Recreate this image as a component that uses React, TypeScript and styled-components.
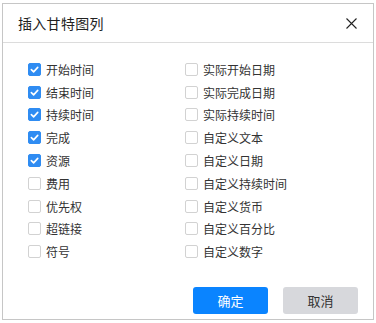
import styled, { createGlobalStyle } from 'styled-components';

const Global = createGlobalStyle`
  body {
    margin: 0;
    background: #fff;
    font-family: "Noto Sans CJK SC", "Noto Sans", sans-serif;
    color: #333;
  }
`;

const Dialog = styled.div`
  box-sizing: border-box;
  margin: 3px 0 0 2px;
  width: 372px;
  height: 317px;
  border: 1px solid #c6c6c6;
  display: flex;
  flex-direction: column;
  background: #fff;
`;

const Header = styled.div`
  height: 38px;
  border-bottom: 1px solid #dcdcdc;
  display: flex;
  align-items: center;
  justify-content: space-between;
  padding: 0 14px 0 15px;
  flex-shrink: 0;
`;

const Title = styled.div`
  font-size: 14px;
  color: #222;
  letter-spacing: 0.3px;
`;

const Close = styled.button`
  border: none;
  background: none;
  padding: 0;
  width: 16px;
  height: 16px;
  display: flex;
  align-items: center;
  justify-content: center;
  cursor: pointer;
`;

const Body = styled.div`
  flex: 1;
  display: grid;
  grid-template-columns: 157px 157px;
  grid-auto-flow: column;
  grid-template-rows: repeat(9, 22.8px);
  padding: 15px 0 0 25px;
`;

const Item = styled.label`
  display: flex;
  align-items: center;
  gap: 5px;
  font-size: 12px;
  color: #333;
  cursor: pointer;
`;

const Box = styled.span<{ $checked: boolean }>`
  box-sizing: border-box;
  width: 13px;
  height: 13px;
  border-radius: 2px;
  border: 1px solid ${({ $checked }) => ($checked ? '#2f8cf2' : '#d2d2d2')};
  background: ${({ $checked }) => ($checked ? '#2f8cf2' : '#fff')};
  display: flex;
  align-items: center;
  justify-content: center;
  flex-shrink: 0;
`;

const Footer = styled.div`
  display: flex;
  justify-content: flex-end;
  gap: 15px;
  padding: 0 15px 2px 0;
  height: 30px;
`;

const Button = styled.button<{ $primary?: boolean }>`
  width: 75px;
  height: 27px;
  border: none;
  border-radius: 3px;
  font-family: inherit;
  font-size: 13px;
  background: ${({ $primary }) => ($primary ? '#0a84ff' : '#d7d8dc')};
  color: ${({ $primary }) => ($primary ? '#fff' : '#333')};
  cursor: pointer;
`;

const left = [
  ['开始时间', true],
  ['结束时间', true],
  ['持续时间', true],
  ['完成', true],
  ['资源', true],
  ['费用', false],
  ['优先权', false],
  ['超链接', false],
  ['符号', false],
] as const;

const right = [
  '实际开始日期',
  '实际完成日期',
  '实际持续时间',
  '自定义文本',
  '自定义日期',
  '自定义持续时间',
  '自定义货币',
  '自定义百分比',
  '自定义数字',
];

const Check = ({ checked }: { checked: boolean }) => (
  <Box $checked={checked}>
    {checked && (
      <svg width="9" height="9" viewBox="0 0 10 10">
        <path d="M1.5 5.2 L4 7.6 L8.6 2.6" fill="none" stroke="#fff" strokeWidth="1.8" strokeLinecap="round" strokeLinejoin="round" />
      </svg>
    )}
  </Box>
);

export default function App() {
  const items: [string, boolean][] = [
    ...left.map(([t, c]) => [t, c] as [string, boolean]),
    ...right.map((t) => [t, false] as [string, boolean]),
  ];
  return (
    <>
      <Global />
      <Dialog>
        <Header>
          <Title>插入甘特图列</Title>
          <Close>
            <svg width="11" height="11" viewBox="0 0 11 11">
              <path d="M0.5 0.5 L10.5 10.5 M10.5 0.5 L0.5 10.5" stroke="#222" strokeWidth="1.1" />
            </svg>
          </Close>
        </Header>
        <Body>
          {items.map(([t, c]) => (
            <Item key={t}>
              <Check checked={c} />
              {t}
            </Item>
          ))}
        </Body>
        <Footer>
          <Button $primary>确定</Button>
          <Button>取消</Button>
        </Footer>
      </Dialog>
    </>
  );
}
